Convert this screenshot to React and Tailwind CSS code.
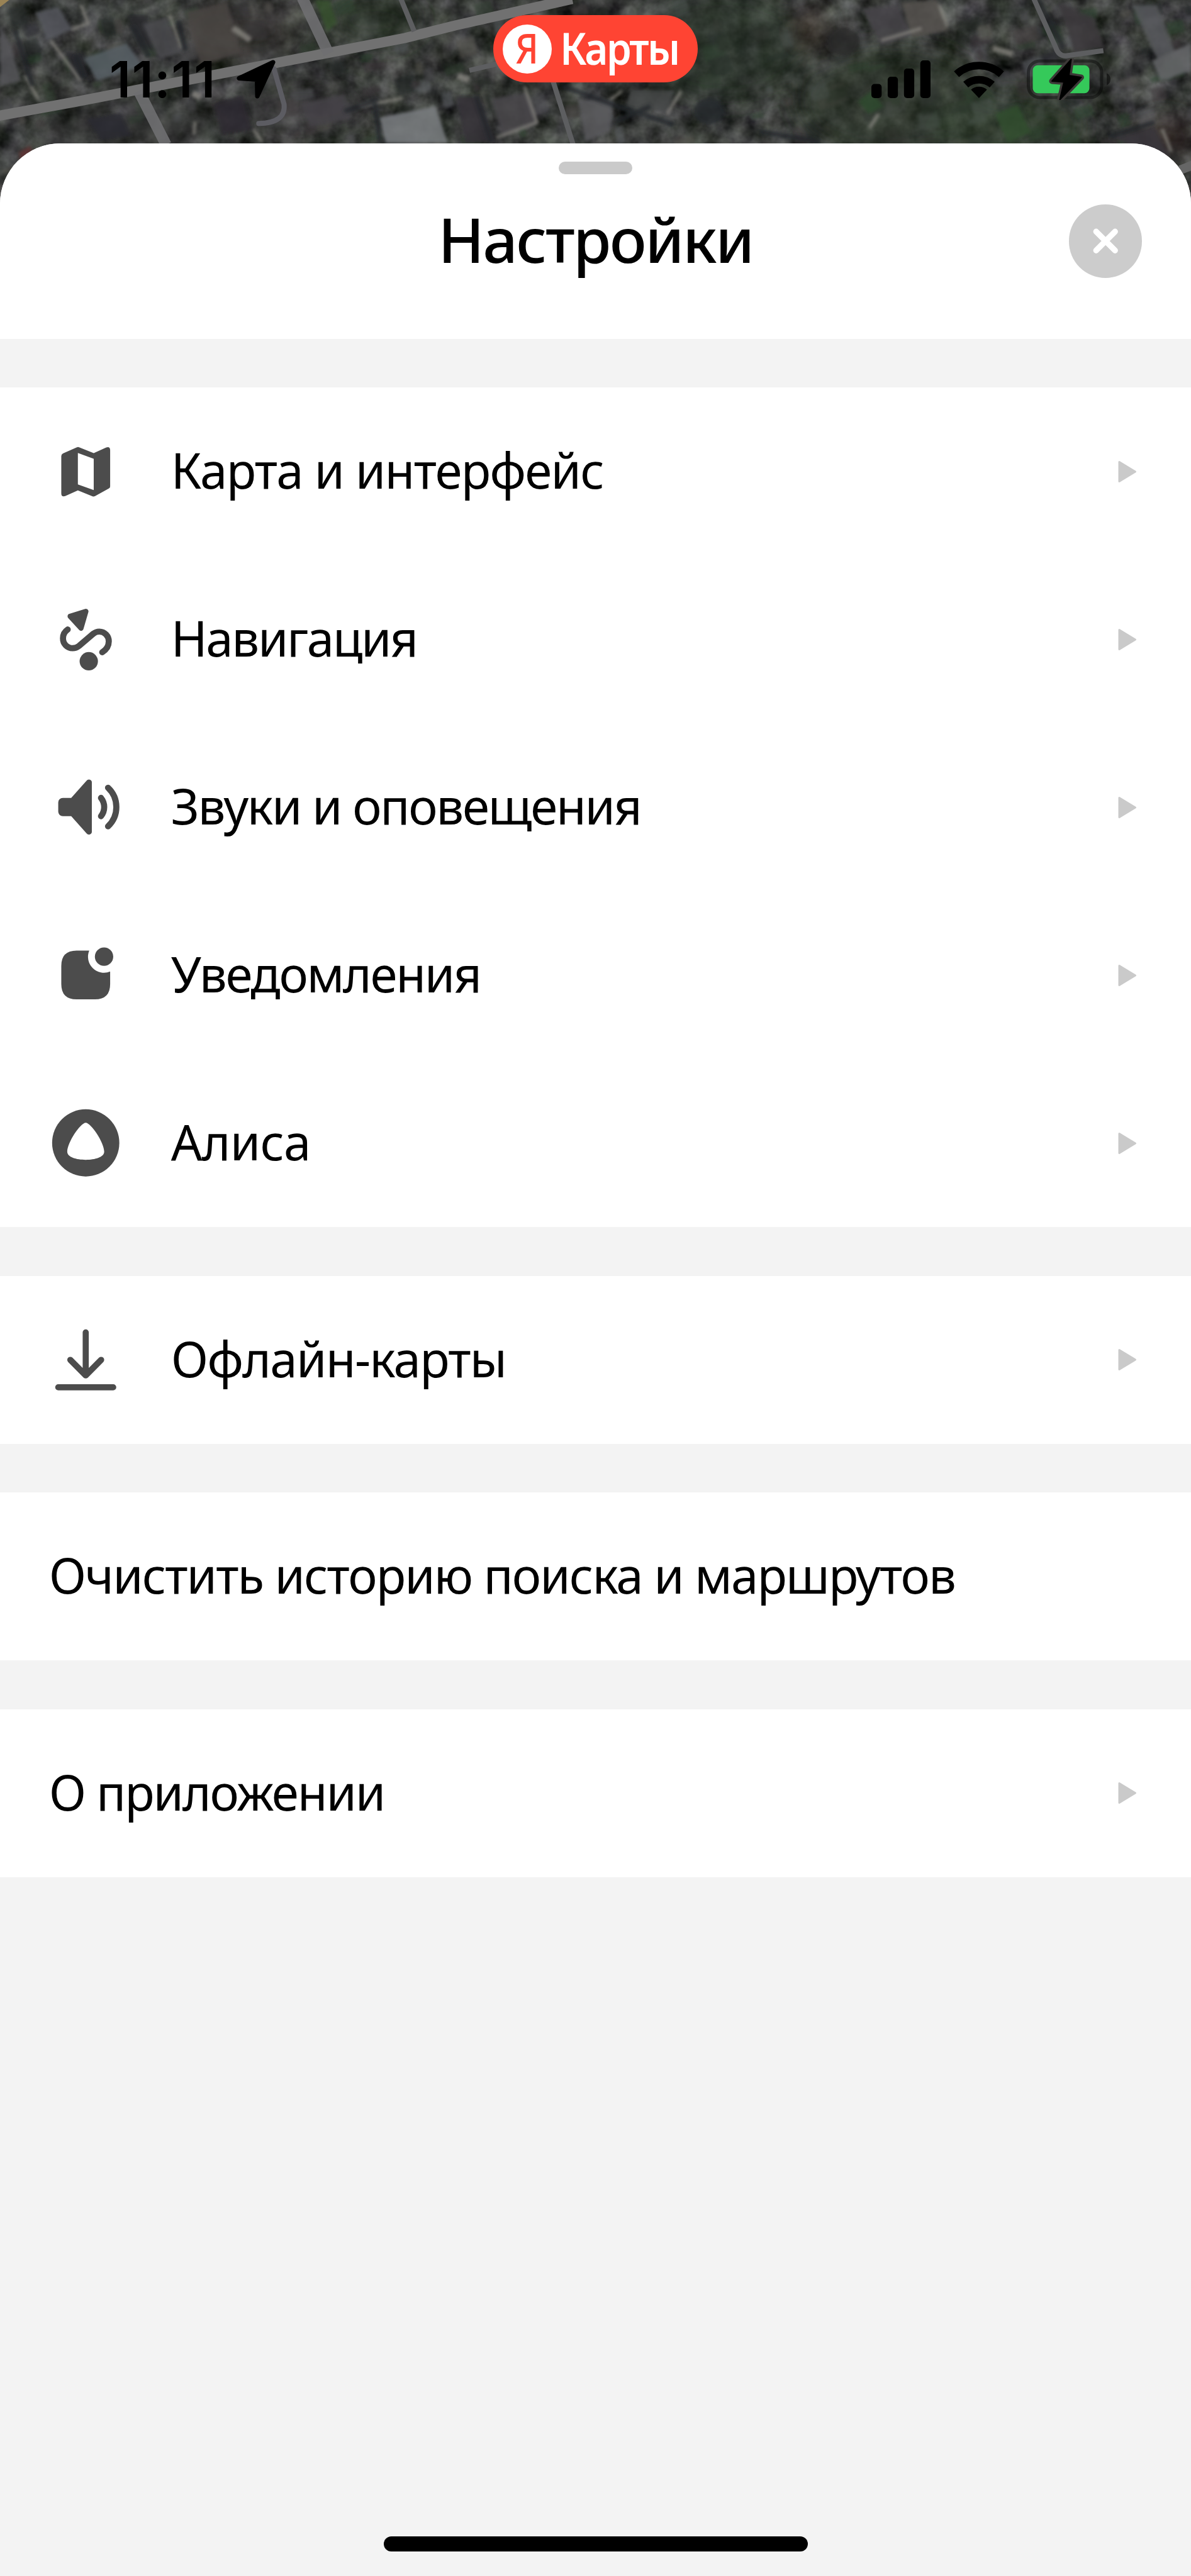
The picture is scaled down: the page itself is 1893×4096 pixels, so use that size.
import { useState } from 'react'

const MapIcon = () => (
  <svg className="size-[116.5px] text-[#4c4c4c]" viewBox="0 0 24 24" fill="currentColor">
    <path fillRule="evenodd" d="M4.55 5.97L9.1 3.95q.4-.16.75 0l4.77 1.9 4.1-1.85q1.28-.4 1.28.9v11.9q0 .45-.45.68L15 20q-.4.17-.75.02l-4.82-1.95L5.3 19.95Q4 20.3 4 19.1V6.85q0-.62.55-.88zM9.43 5.8v10.3l5.19 1.85V7.75z" />
  </svg>
)

const RouteIcon = () => (
  <svg className="size-[116.5px] text-[#4c4c4c]" viewBox="0 0 24 24" fill="currentColor" stroke="currentColor" strokeLinecap="round" strokeLinejoin="round">
    <path strokeWidth="1.7" d="M6.9 4.3l5.15-1.6-1.6 5.5z" />
    <path fill="none" strokeWidth="2" d="M6.1 8.65C5.1 9.3 4.56 10.3 4.56 11.55A3.15 3.15 0 0 0 7.7 14.77c.8 0 1.45-.25 2.05-.72l4.7-4c.6-.5 1.25-.73 2-.73a3.15 3.15 0 0 1 3.1 3.2c0 1.6-.9 2.8-2.15 3.56" />
    <circle cx="13" cy="19.04" r="3" stroke="none" />
  </svg>
)

const SoundIcon = () => (
  <svg className="size-[116.5px] text-[#4c4c4c]" viewBox="0 0 24 24" fill="currentColor">
    <path d="M4.5 9h2.75l5-5.6A.97.97 0 0 1 14 4.05v15.9a.97.97 0 0 1-1.75.65L7.25 15H4.5A1.5 1.5 0 0 1 3 13.5v-3A1.5 1.5 0 0 1 4.5 9z" />
    <path fill="none" stroke="currentColor" strokeWidth="2" strokeLinecap="round" d="M17 9a4.8 4.8 0 0 1 0 6M19.3 5.67a8.7 8.7 0 0 1 0 12.66" />
  </svg>
)

const BadgeIcon = () => (
  <svg className="size-[116.5px] text-[#4c4c4c]" viewBox="0 0 24 24" fill="currentColor">
    <path d="M9 4h4.15A5.25 5.25 0 0 0 20 10.87V15q0 5-5 5H9q-5 0-5-5V9q0-5 5-5z" />
    <circle cx="18" cy="6" r="3" />
  </svg>
)

const AliceIcon = () => (
  <svg className="size-[116.5px] text-[#4c4c4c]" viewBox="0 0 24 24" fill="currentColor">
    <circle cx="12" cy="12" r="11" />
    <path fill="#fff" d="M12 5.4c1.7 0 6.05 6.5 6.05 9.5 0 1.8-3 2.65-6.05 2.65s-6.05-.85-6.05-2.65c0-3 4.35-9.5 6.05-9.5z" />
  </svg>
)

const DownloadIcon = () => (
  <svg className="size-[116.5px] text-[#4c4c4c]" viewBox="0 0 24 24" fill="none" stroke="currentColor" strokeWidth="2" strokeLinecap="round" strokeLinejoin="round">
    <path d="M12 3v14M6.95 12L12 17.1 17.05 12M3 21h18" />
  </svg>
)

const GROUPS = [
  [
    { icon: MapIcon, label: 'Карта и интерфейс', tracking: 'tracking-[-1.7px]', arrow: true },
    { icon: RouteIcon, label: 'Навигация', tracking: 'tracking-[-2.4px]', arrow: true },
    { icon: SoundIcon, label: 'Звуки и оповещения', tracking: 'tracking-[-2.3px]', arrow: true },
    { icon: BadgeIcon, label: 'Уведомления', tracking: 'tracking-[-2.3px]', arrow: true },
    { icon: AliceIcon, label: 'Алиса', tracking: 'tracking-[-0.8px]', arrow: true },
  ],
  [{ icon: DownloadIcon, label: 'Офлайн-карты', tracking: 'tracking-[-1.7px]', arrow: true }],
  [{ label: 'Очистить историю поиска и маршрутов', tracking: 'tracking-[-1.9px]', arrow: false }],
  [{ label: 'О приложении', tracking: 'tracking-[-2.1px]', arrow: true }],
]

// Small roofs, yards and tree crowns scattered over the ground
const PATCH_COLORS = ['#4b4b4f', '#2b2b30', '#333f30', '#575550', '#252b28', '#45403f', '#2f4430', '#5c5f63', '#232528', '#3a3539']

function makePatches(count) {
  let seed = 7
  const rand = () => {
    seed = (seed * 16807) % 2147483647
    return seed / 2147483647
  }
  return Array.from({ length: count }, () => ({
    x: rand() * 2352,
    y: rand() * 400,
    w: 12 + rand() * 34,
    h: 8 + rand() * 30,
    angle: -18 + rand() * 10,
    color: PATCH_COLORS[Math.floor(rand() * PATCH_COLORS.length)],
  }))
}

const PATCHES = makePatches(320)

// Satellite map visible behind the sheet
function SatelliteMap() {
  return (
    <svg className="absolute inset-x-0 top-0 h-[338px] w-full" viewBox="0 0 2352 420" preserveAspectRatio="none">
      <defs>
        <filter id="ground" x="0" y="0" width="100%" height="100%" colorInterpolationFilters="sRGB">
          <feTurbulence type="fractalNoise" baseFrequency="0.02" numOctaves="4" seed="11" />
          <feColorMatrix values="0.5 0.04 0 0 -0.05  0.5 0.08 0 0 -0.062  0.5 0.02 0.03 0 -0.055  0 0 0 0 1" />
        </filter>
        <filter id="soft" x="-20%" y="-20%" width="140%" height="140%">
          <feGaussianBlur stdDeviation="3" />
        </filter>
        <filter id="haze" x="-30%" y="-30%" width="160%" height="160%">
          <feGaussianBlur stdDeviation="22" />
        </filter>
      </defs>
      <rect width="2352" height="420" fill="#38393a" />
      <rect width="2352" height="420" filter="url(#ground)" />

      <g filter="url(#soft)" opacity="0.6">
        {PATCHES.map((p, i) => (
          <rect key={i} x={p.x} y={p.y} width={p.w} height={p.h} rx="4" fill={p.color} transform={`rotate(${p.angle} ${p.x} ${p.y})`} />
        ))}
      </g>

      {/* Vegetation and bare ground */}
      <g filter="url(#haze)" opacity="0.5">
        <ellipse cx="1430" cy="90" rx="170" ry="110" fill="#2c382b" />
        <ellipse cx="1760" cy="200" rx="190" ry="110" fill="#2d3b2c" />
        <ellipse cx="1980" cy="250" rx="160" ry="60" fill="#2d4329" />
        <ellipse cx="740" cy="40" rx="90" ry="50" fill="#30402d" />
        <ellipse cx="250" cy="250" rx="200" ry="40" fill="#363636" />
        <ellipse cx="470" cy="60" rx="120" ry="60" fill="#453f3e" />
        <ellipse cx="600" cy="210" rx="120" ry="40" fill="#3b383a" />
        <ellipse cx="1605" cy="55" rx="30" ry="40" fill="#5a4a3c" />
        <ellipse cx="2300" cy="270" rx="60" ry="40" fill="#4a3836" />
      </g>
      <g filter="url(#soft)" opacity="0.8">
        <path d="M622 0l30 0 14 45-20 18z" fill="#37522f" />
        <path d="M1965 225l45-18 25 55-45 20z" fill="#33502f" />
        <path d="M1695 200l25-20 25 30-30 15z" fill="#2f4c2d" />
        <ellipse cx="1665" cy="82" rx="32" ry="28" fill="#2a292c" />
        <ellipse cx="1400" cy="220" rx="30" ry="26" fill="#252a2e" />
        <path d="M250 30l40 0 15 70-30-10zM130 100l30 8 20 50-40-10z" fill="#292b2e" />
      </g>

      {/* Roofs */}
      <g filter="url(#soft)" opacity="0.85">
        <path d="M70 25l45-12 28 45-50 22z" fill="#56595e" />
        <path d="M165 115l85-30 32 45-90 30z" fill="#596066" />
        <path d="M282 48l48-15 30 70-46 14z" fill="#4d4d51" />
        <path d="M368 24l80-20 28 100-80 26z" fill="#4a4443" />
        <path d="M0 50l22 40 20 70-42 10z" fill="#56565a" />
        <path d="M170 235l70-12 20 45-60 10z" fill="#2c2b30" />
        <path d="M420 205l60-18 18 70-60 10z" fill="#2d2c31" />
        <path d="M595 205l85-20 12 50-80 16z" fill="#454347" />
        <path d="M748 232l112-22 25 73H762z" fill="#7b7f82" />
        <path d="M970 195l70-12 22 62-70 22z" fill="#48474b" />
        <path d="M900 190l45 0 34 90-60 3z" fill="#343238" />
        <path d="M1140 195l70 5-4 60-50 20z" fill="#5b5c5e" />
        <path d="M1245 178l88 0-16 44-80-10z" fill="#464849" />
        <path d="M1703 18l70-8 28 60-60 20z" fill="#46454a" />
        <path d="M1780 5l70-5 22 60-70 14z" fill="#57534f" />
        <path d="M2090 5l70 30 22 60-60 10z" fill="#3a373b" />
        <path d="M2235 10l50 0 50 130-30 20z" fill="#57585b" />
        <path d="M2275 120l77-35v55l-60 20z" fill="#67696c" />
        <path d="M2200 270l80-20 30 60-60-10z" fill="#38343a" />
      </g>
      <g filter="url(#soft)" stroke="#8c8a84" strokeWidth="6" fill="none" opacity="0.75">
        <path d="M160 10l14 36-32 12M335 30l24 66M100 80l60 80M50 150l26 46M1036 172l24 70-80 30M1345 180l-28 46M1228 180l-24 18M1740 80l80-24M385 240l-2 26M1735 225l-18 28M1855 10l16 42M2295 255l18 45M500 255l18 26M710 210l86-16" />
        <path d="M460 55l34 24M1960 95l40 12M380 184l16 8M904 150l22 8" strokeWidth="12" />
      </g>
      <g filter="url(#soft)" stroke="#24262a" strokeWidth="10" fill="none" opacity="0.75">
        <path d="M30 60l34 110M150 110l14 42M262 52l32 60M352 40l14 60M680 220l60-20 10 80M940 190l30 90M1110 170l110 40 110 36M1215 240l70-30M2050 0l50 95M2190 270l90-28M1500 260l120 20" />
      </g>
      <path d="M0 0h18L0 14z" fill="#9a8355" />
      <path d="M38 300l22-12 6 20-26 10z" fill="#5a3534" filter="url(#soft)" />

      {/* Roads */}
      <g fill="none" strokeLinecap="butt">
        <path d="M-4 229L150 201 800 75 900 50 1130-2" stroke="#717171" strokeWidth="20" />
        <path d="M597-4l52 110M274 180l54 106" stroke="#6f6f71" strokeWidth="22" opacity="0.9" />
        <path d="M541 136l20 70q4 37-50 38" stroke="#5c5c62" strokeWidth="10" strokeLinecap="round" />
        <path d="M791-4l27 66M1092 160l40 126M927 139l60-14M2041-4l44 98q6 18 22 16l72-10" stroke="#5d5e60" strokeWidth="10" />
        <path d="M2330 336l26-10" stroke="#666" strokeWidth="18" />
      </g>
    </svg>
  )
}

function StatusBar() {
  return (
    <div className="relative grid h-[228px] grid-cols-[1fr_auto_1fr] items-start">
      <div className="flex h-full items-center gap-[32px] pt-6 pl-[174px]">
        <span className="font-['Inter',sans-serif] text-[80px] leading-none font-semibold tracking-[1.8px] text-black">11:11</span>
        <svg className="h-[62px] w-[62px]" viewBox="0 0 62 62" stroke="#000" strokeWidth="7" strokeLinejoin="round">
          <path d="M58 4L4 29.5 32.500 31.500 33 58z" />
        </svg>
      </div>

      <div className="mt-6 flex h-[107px] w-[325px] items-center gap-[13px] rounded-full bg-[#ff4433] pl-[14.500px]">
        <div className="flex size-[78px] shrink-0 items-center justify-center rounded-full bg-white">
          <span className="scale-x-[0.86] pb-[6px] font-['Noto_Sans',sans-serif] text-[66px] leading-none font-medium text-[#ff4433]">Я</span>
        </div>
        <span className="origin-left scale-x-[0.9] pb-[5px] font-['Noto_Sans',sans-serif] text-[71px] leading-none font-semibold tracking-[-3px] text-white">Карты</span>
      </div>

      <div className="flex h-full items-center justify-end gap-[36.500px] pt-6 pr-[128px]">
        <svg className="h-[60px] w-[94px]" viewBox="0 0 94 60">
          <rect y="37.500" width="16.300" height="22.500" rx="5" />
          <rect x="25.900" y="26" width="16.300" height="34" rx="5" />
          <rect x="51.800" y="13" width="16.300" height="47" rx="5" />
          <rect x="77.700" width="16.300" height="60" rx="5" />
        </svg>
        <svg className="h-[60px] w-[80px]" viewBox="0 0 80 60">
          <path d="M40 60L27.300 46.500a19 19 0 0 1 25.400 0z" />
          <path fill="none" stroke="#000" strokeWidth="12" d="M19 38.500a32 32 0 0 1 42 0M4.300 22a53.500 53.500 0 0 1 71.400 0" />
        </svg>
        <svg className="h-[66px] w-[133px]" viewBox="0 0 133 66">
          <rect x="2.500" y="4" width="116.500" height="58" rx="18" fill="none" stroke="#000" strokeOpacity="0.4" strokeWidth="5" />
          <path d="M127 23.500q6 3 6 9.500t-6 9.500z" fillOpacity="0.5" />
          <rect x="9.500" y="10.700" width="90" height="44.600" rx="8" fill="#35c95a" />
          <path d="M70.500 1.500L40 36l19 1.500-6.500 28L86.500 30 67 27z" stroke="#3c3837" strokeWidth="9" strokeLinejoin="round" />
          <path d="M70.500 1.500L40 36l19 1.500-6.500 28L86.500 30 67 27z" stroke="#000" strokeWidth="2" strokeLinejoin="round" />
        </svg>
      </div>
    </div>
  )
}

function Row({ item }) {
  const Icon = item.icon
  return (
    <button className="flex h-[266.960px] w-full items-center bg-white pr-[86px] pl-[77.660px] text-left">
      {Icon && (
        <span className="mr-[77.660px] shrink-0">
          <Icon />
        </span>
      )}
      <span className={`flex-1 pb-[5px] font-['Noto_Sans',sans-serif] text-[78px] leading-none whitespace-nowrap text-black ${item.tracking}`}>{item.label}</span>
      {item.arrow && (
        <svg className="h-[36px] w-[30px] text-[#cacaca]" viewBox="0 0 30 36" fill="currentColor" stroke="currentColor" strokeWidth="3" strokeLinejoin="round">
          <path d="M2 2.500v31L27.500 18z" />
        </svg>
      )}
    </button>
  )
}

export default function App() {
  const [open, setOpen] = useState(true)

  return (
    <div className="relative flex h-[4096px] w-[1893px] flex-col overflow-hidden bg-[#2e2f2f]">
      <SatelliteMap />
      <StatusBar />

      {open && (
        <div className="relative flex flex-1 flex-col overflow-hidden rounded-t-[96px] bg-[#f3f3f3]">
          {/* Header */}
          <div className="flex h-[310.700px] shrink-0 flex-col items-center bg-white pt-[29px]">
            <div className="h-[19.500px] w-[116.500px] rounded-full bg-[#cacaca]"></div>
            <div className="mt-[48.500px] grid w-full grid-cols-[1fr_auto_1fr] items-center px-[77.660px]">
              <h1 className="col-start-2 pb-[6px] font-['Noto_Sans',sans-serif] text-[98px] leading-none font-medium tracking-[-2.6px] text-black">Настройки</h1>
              <button onClick={() => setOpen(false)} className="flex size-[116.500px] items-center justify-center justify-self-end rounded-full bg-[#cccccc]">
                <svg className="size-[116.500px]" viewBox="0 0 24 24" stroke="#fff" strokeWidth="1.900" strokeLinecap="round">
                  <path d="M8.900 8.900l6.200 6.200M15.100 8.900l-6.200 6.200" />
                </svg>
              </button>
            </div>
          </div>

          {/* Settings groups */}
          <div className="flex flex-col gap-[77.660px] pt-[77.660px]">
            {GROUPS.map((group, index) => (
              <div key={index}>
                {group.map((item) => (
                  <Row key={item.label} item={item} />
                ))}
              </div>
            ))}
          </div>

          {/* Home indicator */}
          <div className="mx-auto mt-auto mb-[39px] h-[24.500px] w-[674px] shrink-0 rounded-full bg-black"></div>
        </div>
      )}
    </div>
  )
}
